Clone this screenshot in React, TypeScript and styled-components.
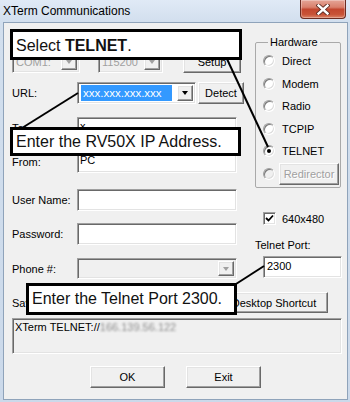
import React from "react";
import styled, { createGlobalStyle, css } from "styled-components";

const GlobalStyle = createGlobalStyle`
  html, body {
    margin: 0;
    padding: 0;
    background: #fff;
  }
  body {
    font-family: "Liberation Sans", Arial, sans-serif;
    font-size: 11px;
    color: #000;
  }
  * {
    box-sizing: border-box;
  }
`;

const sunken = css`
  border: 1px solid;
  border-color: #a0a0a0 #fff #fff #a0a0a0;
  box-shadow: inset 1px 1px 0 #696969, inset -1px -1px 0 #e3e3e3;
`;

const raised = css`
  border: 1px solid;
  border-color: #fff #696969 #696969 #fff;
  box-shadow: inset -1px -1px 0 #a0a0a0, inset 1px 1px 0 #e3e3e3;
  background: #f0f0f0;
`;

const Window = styled.div`
  position: relative;
  width: 350px;
  height: 402px;
  display: flex;
  flex-direction: column;
  background: linear-gradient(180deg, #e0eaf6 0%, #d2dfee 22px, #cbd9ea 100%);
  overflow: hidden;
`;

const TitleBar = styled.div`
  height: 22px;
  flex: none;
  display: flex;
  align-items: flex-start;
  justify-content: space-between;
  padding-left: 3px;
`;

const Title = styled.div`
  font-size: 12px;
  line-height: 22px;
  color: #000;
`;

const CloseButton = styled.div`
  width: 46px;
  height: 19px;
  margin-right: 4px;
  border: 1px solid #6b2c22;
  border-top: none;
  border-radius: 0 0 4px 4px;
  background: linear-gradient(
    180deg,
    #e5a597 0%,
    #d9806c 40%,
    #c3472f 52%,
    #c85337 80%,
    #dc8468 100%
  );
  box-shadow: inset 0 0 0 1px rgba(255, 255, 255, 0.3);
  display: flex;
  align-items: center;
  justify-content: center;
`;

const Client = styled.div`
  flex: 1;
  margin: 0 2px 2px 3px;
  border: 1px solid #8fa3ba;
  background: #f0f0f0;
  display: flex;
  flex-direction: column;
`;

const Top = styled.div`
  display: grid;
  grid-template-columns: 232px 87px;
  column-gap: 11px;
  padding-left: 8px;
`;

const LeftCol = styled.div`
  display: flex;
  flex-direction: column;
`;

const Row = styled.div<{ $mt: number; $h?: number }>`
  display: flex;
  align-items: center;
  height: ${(p) => p.$h ?? 22}px;
  margin-top: ${(p) => p.$mt}px;
`;

const Label = styled.span`
  width: 65px;
  flex: none;
  white-space: nowrap;
`;

const TextBox = styled.div<{ $w?: number }>`
  ${sunken};
  width: ${(p) => p.$w ?? 160}px;
  height: 22px;
  background: #fff;
  padding: 1px 3px 0 2px;
  line-height: 14px;
  white-space: nowrap;
`;

const Combo = styled.div<{ $w: number; $disabled?: boolean }>`
  ${sunken};
  width: ${(p) => p.$w}px;
  height: ${(p) => (p.$disabled ? 21 : 22)}px;
  flex: none;
  background: ${(p) => (p.$disabled ? "#f0f0f0" : "#fff")};
  padding: 2px;
  display: flex;
  align-items: stretch;
`;

const ComboValue = styled.div<{ $disabled?: boolean }>`
  flex: 1;
  display: flex;
  align-items: center;
  padding-left: 1px;
  color: ${(p) => (p.$disabled ? "#a0a0a0" : "#000")};
  white-space: nowrap;
  overflow: hidden;
`;

const Selected = styled.span`
  display: flex;
  align-items: center;
  width: 91px;
  height: 100%;
  padding-left: 2px;
  background: #3399ff;
  color: #fff;
  font-size: 11.5px;
`;

const DropBtn = styled.div`
  ${raised};
  width: 16px;
  flex: none;
  margin-left: auto;
  display: flex;
  align-items: center;
  justify-content: center;
`;

const Arrow = styled.span<{ $disabled?: boolean }>`
  width: 0;
  height: 0;
  border-left: 3.5px solid transparent;
  border-right: 3.5px solid transparent;
  border-top: 4px solid ${(p) => (p.$disabled ? "#a0a0a0" : "#000")};
`;

const Button = styled.div<{ $w: number; $h?: number; $ml?: number; $disabled?: boolean }>`
  ${raised};
  width: ${(p) => p.$w}px;
  height: ${(p) => p.$h ?? 22}px;
  margin-left: ${(p) => p.$ml ?? 0}px;
  flex: none;
  display: flex;
  align-items: center;
  justify-content: center;
  white-space: nowrap;
  color: ${(p) => (p.$disabled ? "#a0a0a0" : "#000")};
  text-shadow: ${(p) => (p.$disabled ? "1px 1px 0 #fff" : "none")};
`;

const RightCol = styled.div`
  display: flex;
  flex-direction: column;
  padding-top: 13px;
`;

const Group = styled.fieldset`
  margin: 0;
  width: 86px;
  height: 152px;
  padding: 2px 0 0 7px;
  border: 1px solid #a9a9a9;
  border-radius: 2px;
`;

const Legend = styled.legend`
  margin-left: 5px;
  padding: 0 2px;
  font-size: 11px;
  line-height: 12px;
`;

const RadioRow = styled.div`
  display: flex;
  align-items: center;
  height: 22.5px;
`;

const RadioCircle = styled.span<{ $checked?: boolean; $disabled?: boolean }>`
  width: 12px;
  height: 12px;
  flex: none;
  border-radius: 50%;
  border: 1px solid;
  border-color: #a0a0a0 #fff #fff #a0a0a0;
  box-shadow: inset 1px 1px 0 #7a7a7a, inset -1px -1px 0 #dcdcdc;
  background: ${(p) => (p.$disabled ? "#f0f0f0" : "#fff")};
  display: flex;
  align-items: center;
  justify-content: center;
  &::after {
    content: "";
    width: 4px;
    height: 4px;
    border-radius: 50%;
    background: ${(p) => (p.$checked ? "#000" : "transparent")};
  }
`;

const RadioText = styled.span`
  margin-left: 7px;
  white-space: nowrap;
`;

const CheckRow = styled.div`
  display: flex;
  align-items: center;
  height: 13px;
  margin: 24px 0 0 8px;
`;

const CheckBox = styled.span`
  ${sunken};
  width: 13px;
  height: 13px;
  background: #fff;
  display: flex;
  align-items: center;
  justify-content: center;
`;

const CheckText = styled.span`
  margin-left: 6px;
`;

const PortLabel = styled.div`
  margin-top: 14px;
  line-height: 13px;
`;

const PortBox = styled.div`
  margin: 4px 0 0 8px;
`;

const SaveRow = styled.div`
  display: grid;
  grid-template-columns: 208px 108px;
  align-items: center;
  height: 21px;
  margin-top: 13px;
  padding-left: 8px;
`;

const OutputBox = styled.div`
  ${sunken};
  width: 330px;
  height: 36px;
  margin: 5px 0 0 8px;
  background: #f0f0f0;
  padding: 1px 2px;
  line-height: 14px;
  white-space: nowrap;
`;

const BlurIp = styled.span`
  color: #8c8c8c;
  filter: blur(1.3px);
`;

const ButtonRow = styled.div`
  display: flex;
  justify-content: center;
  gap: 21px;
  margin-top: 12px;
`;

const Lines = styled.svg`
  position: absolute;
  left: 0;
  top: 0;
  pointer-events: none;
`;

const Callout = styled.div<{ $x: number; $y: number; $w: number; $h: number; $pt?: number }>`
  position: absolute;
  left: ${(p) => p.$x}px;
  top: ${(p) => p.$y}px;
  width: ${(p) => p.$w}px;
  height: ${(p) => p.$h}px;
  background: #fff;
  border: 3px solid #000;
  display: flex;
  align-items: center;
  padding: ${(p) => p.$pt ?? 0}px 0 0 3px;
  font-size: 16px;
  color: #111;
  white-space: nowrap;
`;

const hardware = ["Direct", "Modem", "Radio", "TCPIP", "TELNET"];

export default function App() {
  return (
    <>
      <GlobalStyle />
      <Window>
        <TitleBar>
          <Title>XTerm Communications</Title>
          <CloseButton>
            <svg width="14" height="11" viewBox="0 0 14 11">
              <path
                d="M2.5 1.5 L11.5 9.5 M11.5 1.5 L2.5 9.5"
                stroke="#5a2a22"
                strokeWidth="4.2"
                strokeLinecap="square"
              />
              <path
                d="M2.5 1.5 L11.5 9.5 M11.5 1.5 L2.5 9.5"
                stroke="#fff"
                strokeWidth="2.4"
                strokeLinecap="square"
              />
            </svg>
          </CloseButton>
        </TitleBar>

        <Client>
          <Top>
            <LeftCol>
              <Row $mt={28}>
                <Combo $w={68} $disabled>
                  <ComboValue $disabled>COM1:</ComboValue>
                  <DropBtn>
                    <Arrow $disabled />
                  </DropBtn>
                </Combo>
                <Combo $w={65} $disabled style={{ marginLeft: 18 }}>
                  <ComboValue $disabled>115200</ComboValue>
                  <DropBtn>
                    <Arrow $disabled />
                  </DropBtn>
                </Combo>
                <Button $w={58} $ml={20}>
                  Setup
                </Button>
              </Row>

              <Row $mt={9}>
                <Label>URL:</Label>
                <Combo $w={119}>
                  <ComboValue>
                    <Selected>xxx.xxx.xxx.xxx</Selected>
                  </ComboValue>
                  <DropBtn>
                    <Arrow />
                  </DropBtn>
                </Combo>
                <Button $w={46} $ml={2}>
                  Detect
                </Button>
              </Row>

              <Row $mt={13}>
                <Label>To:</Label>
                <TextBox>x</TextBox>
              </Row>
              <Row $mt={12}>
                <Label>From:</Label>
                <TextBox>PC</TextBox>
              </Row>
              <Row $mt={16}>
                <Label>User Name:</Label>
                <TextBox />
              </Row>
              <Row $mt={12}>
                <Label>Password:</Label>
                <TextBox />
              </Row>
              <Row $mt={13} $h={21}>
                <Label>Phone #:</Label>
                <Combo $w={160} $disabled>
                  <ComboValue $disabled />
                  <DropBtn>
                    <Arrow $disabled />
                  </DropBtn>
                </Combo>
              </Row>
            </LeftCol>

            <RightCol>
              <Group>
                <Legend>Hardware</Legend>
                {hardware.map((h) => (
                  <RadioRow key={h}>
                    <RadioCircle $checked={h === "TELNET"} />
                    <RadioText>{h}</RadioText>
                  </RadioRow>
                ))}
                <RadioRow>
                  <RadioCircle $disabled />
                  <Button $w={60} $ml={4} $disabled>
                    Redirector
                  </Button>
                </RadioRow>
              </Group>

              <CheckRow>
                <CheckBox>
                  <svg width="9" height="9" viewBox="0 0 9 9">
                    <path d="M1 4 L3.5 6.5 L8 1.5" stroke="#000" strokeWidth="1.8" fill="none" />
                  </svg>
                </CheckBox>
                <CheckText>640x480</CheckText>
              </CheckRow>

              <PortLabel>Telnet Port:</PortLabel>
              <PortBox>
                <TextBox $w={79} style={{ paddingLeft: 3, paddingTop: 2 }}>
                  2300
                </TextBox>
              </PortBox>
            </RightCol>
          </Top>

          <SaveRow>
            <span>Save As:</span>
            <Button $w={108} $h={21}>
              Desktop Shortcut
            </Button>
          </SaveRow>

          <OutputBox>
            XTerm TELNET://<BlurIp>166.139.56.122</BlurIp>
          </OutputBox>

          <ButtonRow>
            <Button $w={75}>OK</Button>
            <Button $w={75}>Exit</Button>
          </ButtonRow>
        </Client>

        <Lines width="350" height="402" viewBox="0 0 350 402">
          <line x1="227" y1="59" x2="268" y2="147" stroke="#000" strokeWidth="2" />
          <line x1="22" y1="128" x2="78" y2="93" stroke="#000" strokeWidth="2" />
          <line x1="236" y1="284" x2="264" y2="266" stroke="#000" strokeWidth="2" />
        </Lines>

        <Callout $x={10} $y={29} $w={232} $h={31} $pt={2}>
          Select&nbsp;<b>TELNET</b>.
        </Callout>
        <Callout $x={10} $y={127} $w={231} $h={29}>
          Enter the RV50X IP Address.
        </Callout>
        <Callout $x={26} $y={283} $w={211} $h={32}>
          Enter the Telnet Port 2300.
        </Callout>
      </Window>
    </>
  );
}
